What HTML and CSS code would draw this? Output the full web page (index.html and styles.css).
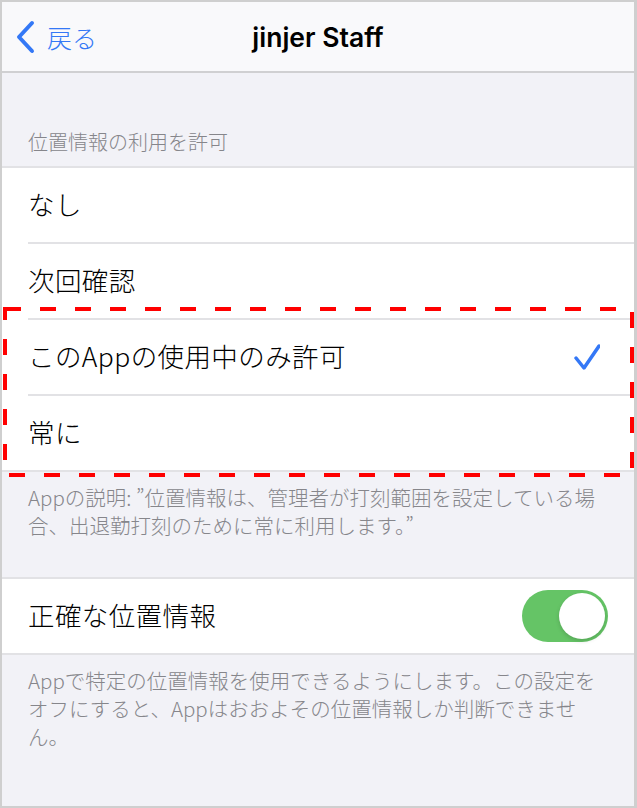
FILE: index.html
```html
<!DOCTYPE html>
<html lang="ja">
<head>
    <meta charset="UTF-8">
    <meta name="viewport" content="width=device-width, initial-scale=1.0">
    <title>jinjer Staff</title>
    <link rel="stylesheet" href="styles.css">
</head>
<body>
<div class="screen">
    <header class="navbar">
        <a class="back">
            <svg class="chevron" width="22" height="36" viewBox="0 0 22 36">
                <polyline points="17,4 4,18 17,32" />
            </svg>
            <span>戻る</span>
        </a>
        <h1 class="title">jinjer Staff</h1>
        <span></span>
    </header>

    <div class="group-header">位置情報の利用を許可</div>
    <ul class="list">
        <li class="row"><div class="row-body">なし</div></li>
        <li class="row"><div class="row-body">次回確認</div></li>
        <li class="row">
            <div class="row-body">
                このAppの使用中のみ許可
                <svg class="check" width="28" height="28" viewBox="0 0 28 28">
                    <polyline points="4,15 12,25 27,3" />
                </svg>
            </div>
        </li>
        <li class="row"><div class="row-body">常に</div></li>
    </ul>
    <p class="group-footer first">Appの説明: ”位置情報は、管理者が打刻範囲を設定している場<br>合、出退勤打刻のために常に利用します。”</p>

    <ul class="list">
        <li class="row">
            <div class="row-body">
                正確な位置情報
                <span class="toggle"><span class="knob"></span></span>
            </div>
        </li>
    </ul>
    <p class="group-footer">Appで特定の位置情報を使用できるようにします。この設定を<br>オフにすると、Appはおおよその位置情報しか判断できませ<br>ん。</p>

    <!-- red dashed annotation box -->
    <svg class="highlight" width="631" height="170" viewBox="0 0 631 170">
        <rect x="2" y="2" width="627" height="166" />
    </svg>
</div>
</body>
</html>
```

FILE: styles.css
```css
body{
    margin: 0;
    font-family: "Noto Sans CJK JP", sans-serif;
    font-weight: 300;
}
.screen{
    position: relative;
    width: 637px;
    height: 808px;
    box-sizing: border-box;
    border: 2px solid #cfcfcf;
    border-right-width: 3px;
    background-color: #f2f2f7;
    overflow: hidden;
}

.navbar{
    height: 69px;
    border-bottom: 2px solid #d0d0d2;
    background-color: #f9f9fb;
    display: grid;
    grid-template-columns: 1fr auto 1fr;
    align-items: center;
}
.back{
    display: flex;
    align-items: center;
    padding-left: 13px;
    color: #3478f6;
    font-size: 25px;
}
.chevron{
    margin-right: 10px;
}
.chevron polyline{
    fill: none;
    stroke: #3478f6;
    stroke-width: 4;
    stroke-linecap: round;
    stroke-linejoin: round;
}
.title{
    margin: 0;
    font-family: "Inter", "Liberation Sans", sans-serif;
    font-weight: 600;
    font-size: 26.5px;
    color: #000;
}

.group-header{
    height: 93px;
    box-sizing: border-box;
    display: flex;
    align-items: flex-end;
    padding: 0 0 12px 26px;
    font-size: 20px;
    line-height: 24px;
    color: #86868b;
}

.list{
    list-style: none;
    margin: 0;
    padding: 0;
    background-color: #fff;
    border-top: 2px solid #e2e2e5;
    border-bottom: 2px solid #e2e2e5;
}
.row{
    padding-left: 26px;
}
.row-body{
    height: 74px;
    box-sizing: border-box;
    display: flex;
    align-items: center;
    justify-content: space-between;
    padding: 0 34px 4px 0;
    font-size: 26.5px;
    letter-spacing: 0.4px;
    color: #000;
}
.row:not(:last-child) .row-body{
    height: 76px;
    border-bottom: 2px solid #e2e2e5;
}
.check{
    margin-top: 4px;
}
.check polyline{
    fill: none;
    stroke: #3478f6;
    stroke-width: 3.5;
    stroke-linecap: round;
    stroke-linejoin: round;
}

.toggle{
    position: relative;
    width: 86px;
    height: 52px;
    margin: 4px -8px 0 0;
    border-radius: 26px;
    background-color: #65c466;
}
.knob{
    position: absolute;
    top: 3px;
    right: 3px;
    width: 46px;
    height: 46px;
    border-radius: 50%;
    background-color: #fff;
    box-shadow: 0 2px 4px rgba(0, 0, 0, 0.15);
}

.group-footer{
    margin: 0;
    padding: 11px 10px 0 26px;
    font-size: 20.5px;
    line-height: 28px;
    color: #86868b;
    white-space: nowrap;
}
.group-footer.first{
    height: 105px;
    box-sizing: border-box;
}

.highlight{
    position: absolute;
    left: 1px;
    top: 305px;
}
.highlight rect{
    fill: none;
    stroke: #ff0000;
    stroke-width: 4;
    stroke-dasharray: 16 19;
}
```
